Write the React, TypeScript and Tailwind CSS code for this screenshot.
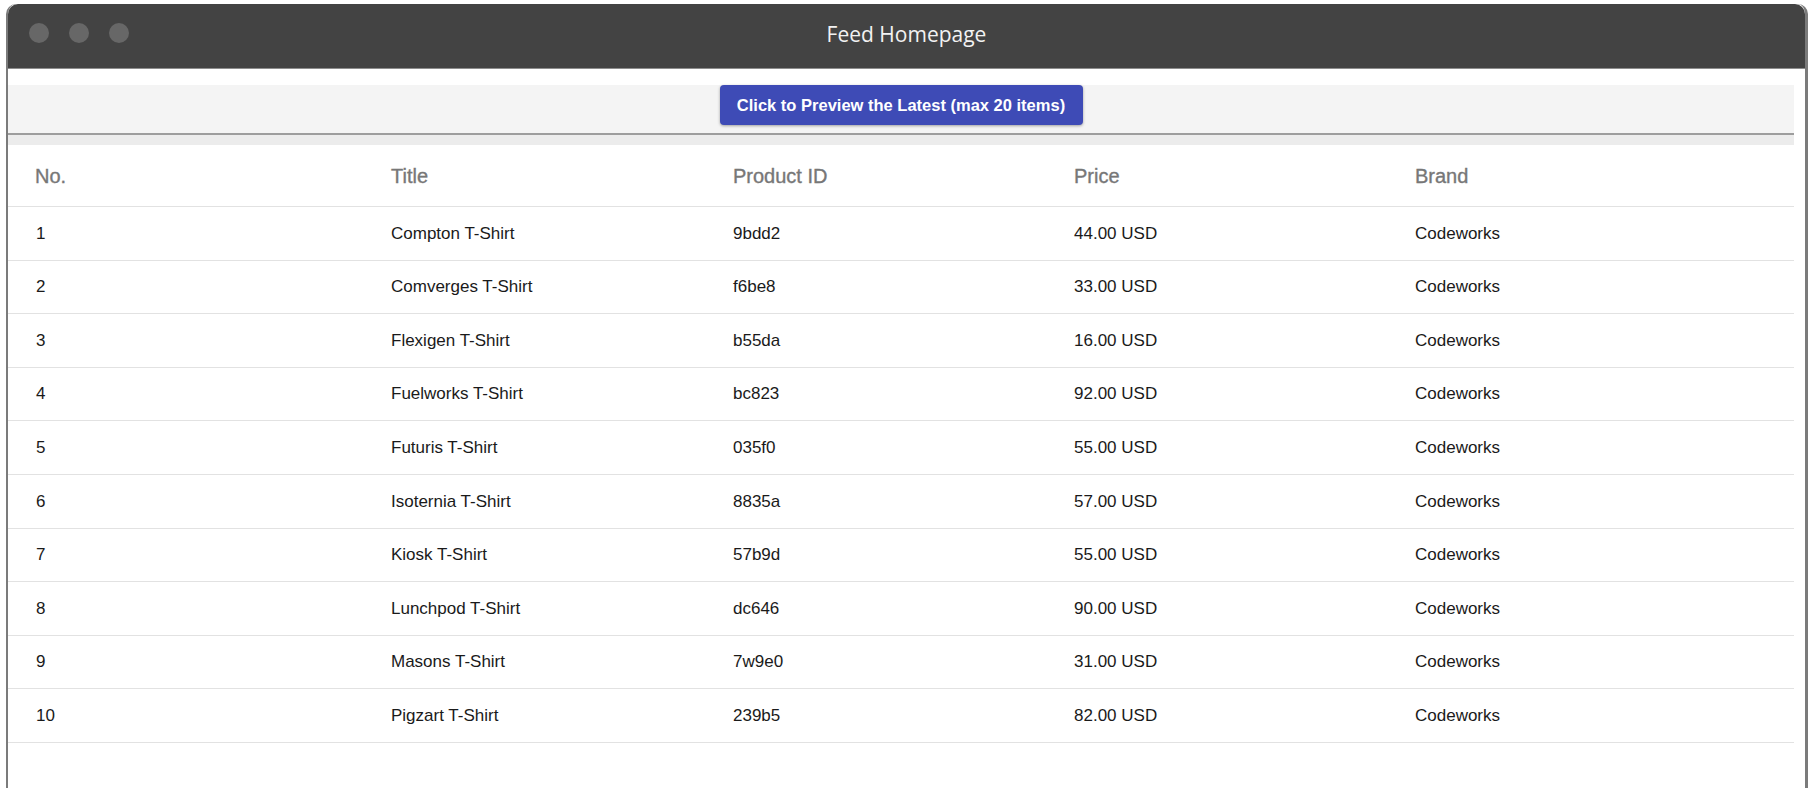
import React from "react";

type Item = { title: string; id: string; price: string };

const items: Item[] = [
  { title: "Compton T-Shirt", id: "9bdd2", price: "44.00 USD" },
  { title: "Comverges T-Shirt", id: "f6be8", price: "33.00 USD" },
  { title: "Flexigen T-Shirt", id: "b55da", price: "16.00 USD" },
  { title: "Fuelworks T-Shirt", id: "bc823", price: "92.00 USD" },
  { title: "Futuris T-Shirt", id: "035f0", price: "55.00 USD" },
  { title: "Isoternia T-Shirt", id: "8835a", price: "57.00 USD" },
  { title: "Kiosk T-Shirt", id: "57b9d", price: "55.00 USD" },
  { title: "Lunchpod T-Shirt", id: "dc646", price: "90.00 USD" },
  { title: "Masons T-Shirt", id: "7w9e0", price: "31.00 USD" },
  { title: "Pigzart T-Shirt", id: "239b5", price: "82.00 USD" },
];

const cols = "grid grid-cols-[356px_342px_341px_341px_1fr] pl-[27px]";

function TitleBar() {
  return (
    <div className="relative h-[65px] rounded-t-[10px] bg-[#434343] border-b border-[#8d8d8d] flex items-center justify-center">
      <div className="absolute left-[21px] top-[19px] flex gap-[20px]">
        <span className="w-[20px] h-[20px] rounded-full bg-[#676767]" />
        <span className="w-[20px] h-[20px] rounded-full bg-[#676767]" />
        <span className="w-[20px] h-[20px] rounded-full bg-[#676767]" />
      </div>
      <span className="font-['Open_Sans',sans-serif] text-[21px] text-[#f2f2f2] mt-[-2px]">
        Feed Homepage
      </span>
    </div>
  );
}

function Toolbar() {
  return (
    <div className="pt-[16px]">
      <div className="h-[48px] bg-[#f4f4f4] flex justify-center">
        <button className="h-[40px] w-[363px] rounded-[4px] bg-[#3e4bb6] text-white font-bold text-[16.5px] shadow-[0_1px_3px_rgba(0,0,0,0.35)]">
          Click to Preview the Latest (max 20 items)
        </button>
      </div>
      <div className="h-[2px] bg-[#9d9d9d]" />
      <div className="h-[10px] bg-[#ececec]" />
    </div>
  );
}

function FeedTable() {
  return (
    <div className="font-['Liberation_Sans',Arial,sans-serif]">
      <div className={`${cols} h-[62px] items-center border-b border-[#e2e2e2] text-[20px] text-[#777777] [-webkit-text-stroke:0.35px_#777777]`}>
        <div>No.</div>
        <div>Title</div>
        <div>Product ID</div>
        <div>Price</div>
        <div>Brand</div>
      </div>
      {items.map((it, i) => (
        <div
          key={it.id}
          className={`${cols} h-[53.6px] items-center border-b border-[#e2e2e2] text-[17px] text-[#1a1a1a]`}
        >
          <div className="pl-[1px]">{i + 1}</div>
          <div>{it.title}</div>
          <div>{it.id}</div>
          <div>{it.price}</div>
          <div>Codeworks</div>
        </div>
      ))}
    </div>
  );
}

export default function App() {
  return (
    <div className="w-[1818px] h-[788px] bg-white overflow-hidden pt-[4px] pl-[6px] font-['Liberation_Sans',Arial,sans-serif]">
      <div className="w-[1802px] h-[800px] rounded-t-[10px] border-l-2 border-r-[3px] border-[#7b7b7b] bg-white">
        <TitleBar />
        <div className="pr-[11px]">
          <Toolbar />
          <FeedTable />
        </div>
      </div>
    </div>
  );
}
